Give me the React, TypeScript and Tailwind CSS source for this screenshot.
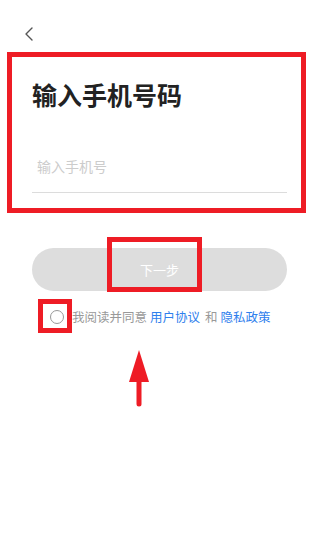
export default function App() {
  return (
    <div className="relative h-[545px] w-full overflow-hidden bg-white font-['Noto_Sans_CJK_SC','Noto_Sans',sans-serif]">
      {/* Header */}
      <div className="h-[66px] pl-[23px] pt-[26px]">
        <svg width="12" height="16" viewBox="0 0 12 16" fill="none">
          <path d="M9 2L3 8l6 6" stroke="#555" strokeWidth="1.4" strokeLinecap="round" strokeLinejoin="round" />
        </svg>
      </div>

      {/* Title & input */}
      <div className="pl-8 pr-9">
        <h1 className="mt-4 text-[25px] font-bold leading-[25px] text-[#222]">输入手机号码</h1>
        <div className="mt-[33px] flex h-[53px] items-center border-b border-[#dcdcdc]">
          <input
            className="w-full pl-[5px] text-[14px] text-[#333] outline-none placeholder:text-[#cccccc]"
            placeholder="输入手机号"
          />
        </div>

        {/* Button */}
        <button className="mt-[55px] flex h-[43px] w-full items-center justify-center rounded-full bg-[#dddddd] text-[13px] text-white">
          下一步
        </button>

        {/* Agreement */}
        <div className="mt-4 flex h-5 items-center pl-[18px] text-[12.5px]">
          <span className="h-[14px] w-[14px] shrink-0 rounded-full border border-[#999]" />
          <span className="ml-2 text-[#999]">我阅读并同意</span>
          <span className="ml-[3px] text-[#2f80ed]">用户协议</span>
          <span className="ml-[5px] text-[#999]">和</span>
          <span className="ml-[3px] text-[#2f80ed]">隐私政策</span>
        </div>
      </div>

      {/* Annotations */}
      <div className="pointer-events-none absolute left-[7px] top-[52px] h-[161px] w-[299px] border-[5px] border-[#ee1c25]" />
      <div className="pointer-events-none absolute left-[107px] top-[237px] h-[55px] w-[95px] border-[5px] border-[#ee1c25]" />
      <div className="pointer-events-none absolute left-[38px] top-[299px] h-[34px] w-[34px] border-[5px] border-[#ee1c25]" />
      <svg className="pointer-events-none absolute left-[125px] top-[346px]" width="30" height="62" viewBox="0 0 30 62">
        <path d="M14 4L4 36h20z" fill="#ee1c25" />
        <path d="M14 34v24" stroke="#ee1c25" strokeWidth="5" strokeLinecap="round" />
      </svg>
    </div>
  );
}
